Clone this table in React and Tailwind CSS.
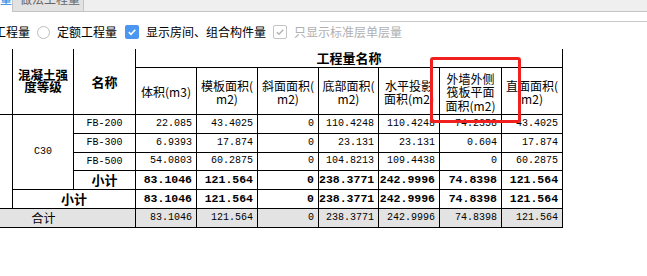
const rows = [
  ['FB-200', '22.085', '43.4025', '0', '110.4248', '110.4248', '74.2358', '43.4025'],
  ['FB-300', '6.9393', '17.874', '0', '23.131', '23.131', '0.604', '17.874'],
  ['FB-500', '54.0803', '60.2875', '0', '104.8213', '109.4438', '0', '60.2875'],
]
const totals = ['83.1046', '121.564', '0', '238.3771', '242.9996', '74.8398', '121.564']

const cell = 'border border-black'
const num = "border border-black text-right pr-[4px] font-['Liberation_Mono',monospace] text-[10px] leading-none"
const bnum = "border border-black text-right pr-[4px] font-['Liberation_Mono',monospace] text-[11.5px] font-bold leading-none"
const head = 'border border-black text-center text-[12px] leading-[13.5px] font-normal align-middle pt-[3px]'

export default function App() {
  return (
    <div className="relative w-[647px] h-[276px] overflow-hidden bg-white text-black font-['Noto_Sans_CJK_SC',sans-serif]">
      {/* tabs */}
      <div className="h-[12px] overflow-hidden bg-[#efefef] flex">
        <div className="w-[12px] bg-white overflow-hidden flex justify-end">
          <div className="-mt-[14px] h-[26px] flex items-center whitespace-nowrap text-[12px] text-[#2a7de1]">清单工程量</div>
        </div>
        <div className="w-[72px] h-[12px] bg-[#e2e2e2] border-l border-r border-b border-[#c4c4c4] overflow-hidden">
          <div className="-mt-[14px] h-[26px] flex items-center pl-[7px] whitespace-nowrap text-[12px] text-[#666]">做法工程量</div>
        </div>
        <div className="flex-1 border-b border-[#c4c4c4]" />
      </div>
      <div className="h-[10px] flex items-end">
        <div className="ml-[320px] flex-1 h-px bg-[#c8c8c8]" />
      </div>

      {/* options */}
      <div className="h-[20px] flex items-center text-[12px] whitespace-nowrap">
        <span className="-ml-[6px]">工程量</span>
        <span className="ml-[7px] w-[13px] h-[13px] rounded-full border border-[#bdbdbd] bg-white" />
        <span className="ml-[7px]">定额工程量</span>
        <span className="ml-[8px] w-[14px] h-[14px] rounded-[2px] bg-[#4a96f0] flex items-center justify-center">
          <svg width="10" height="10" viewBox="0 0 10 10"><path d="M1.8 5.2 L4 7.3 L8.3 2.8" fill="none" stroke="white" strokeWidth="1.6" /></svg>
        </span>
        <span className="ml-[7px]">显示房间、组合构件量</span>
        <span className="ml-[7px] w-[14px] h-[14px] rounded-[2px] border border-[#c4c4c4] bg-white flex items-center justify-center">
          <svg width="10" height="10" viewBox="0 0 10 10"><path d="M1.8 5.2 L4 7.3 L8.3 2.8" fill="none" stroke="#b4b4b4" strokeWidth="1.5" /></svg>
        </span>
        <span className="ml-[7px] text-[#b0b0b0]">只显示标准层单层量</span>
      </div>

      {/* table */}
      <div className="mt-[7px] -ml-[49px]">
        <table className="table-fixed border-collapse w-[611px]">
          <colgroup>
            <col className="w-[61px]" />
            <col className="w-[61px]" />
            <col className="w-[62px]" />
            <col className="w-[61px]" />
            <col className="w-[61px]" />
            <col className="w-[61px]" />
            <col className="w-[60px]" />
            <col className="w-[61px]" />
            <col className="w-[62px]" />
            <col className="w-[61px]" />
          </colgroup>
          <thead>
            <tr className="h-[18px]">
              <th rowSpan={2} className={`${cell} border-t-0`} />
              <th rowSpan={2} className={`${cell} border-t-0 text-[12.5px] leading-[12.5px] font-bold`}>
                混凝土强<br />度等级
              </th>
              <th rowSpan={2} className={`${cell} border-t-0 text-[13px] font-bold`}>名称</th>
              <th colSpan={7} className={`${cell} border-t-0 text-[13px] leading-none font-bold`}>工程量名称</th>
            </tr>
            <tr className="h-[47px]">
              <th className={head}>体积(m3)</th>
              <th className={head}>模板面积(<br />m2)</th>
              <th className={head}>斜面面积(<br />m2)</th>
              <th className={head}>底部面积(<br />m2)</th>
              <th className={head}>水平投影<br />面积(m2)</th>
              <th className={head}>外墙外侧<br />筏板平面<br />面积(m2)</th>
              <th className={head}>直面面积(<br />m2)</th>
            </tr>
          </thead>
          <tbody>
            {rows.map((r, i) => (
              <tr key={r[0]} className={i === 2 ? 'h-[18px]' : 'h-[19px]'}>
                {i === 0 && <td rowSpan={5} className={cell} />}
                {i === 0 && (
                  <td rowSpan={4} className={`${cell} text-center font-['Liberation_Mono',monospace] text-[10px]`}>C30</td>
                )}
                <td className={`${cell} text-center font-['Liberation_Mono',monospace] text-[10px]`}>{r[0]}</td>
                {r.slice(1).map((v, j) => (
                  <td key={j} className={num}>{v}</td>
                ))}
              </tr>
            ))}
            <tr className="h-[19px]">
              <td className={`${cell} text-center text-[13px] font-bold leading-none`}>小计</td>
              {totals.map((v, j) => (
                <td key={j} className={bnum}>{v}</td>
              ))}
            </tr>
            <tr className="h-[19px]">
              <td colSpan={2} className={`${cell} text-center text-[13px] font-bold leading-none`}>小计</td>
              {totals.map((v, j) => (
                <td key={j} className={bnum}>{v}</td>
              ))}
            </tr>
            <tr className="h-[19px] bg-[#e3e3e3]">
              <td colSpan={3} className={`${cell} text-center text-[12px] leading-none`}>合计</td>
              {totals.map((v, j) => (
                <td key={j} className={num}>{v}</td>
              ))}
            </tr>
          </tbody>
        </table>
      </div>

      {/* highlight */}
      <div className="absolute left-[430px] top-[57px] w-[91px] h-[66px] border-[3px] border-[#f0201f] rounded-[3px]" />
    </div>
  )
}
